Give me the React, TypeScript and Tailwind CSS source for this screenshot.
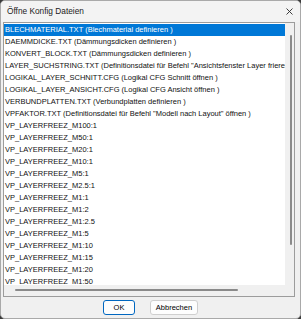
const files = [
  "BLECHMATERIAL.TXT (Blechmaterial definieren )",
  "DAEMMDICKE.TXT (Dämmungsdicken definieren )",
  "KONVERT_BLOCK.TXT (Dämmungsdicken definieren )",
  'LAYER_SUCHSTRING.TXT (Definitionsdatei für Befehl "Ansichtsfenster Layer frieren" öffnen )',
  "LOGIKAL_LAYER_SCHNITT.CFG (Logikal CFG Schnitt öffnen )",
  "LOGIKAL_LAYER_ANSICHT.CFG (Logikal CFG Ansicht öffnen )",
  "VERBUNDPLATTEN.TXT (Verbundplatten definieren )",
  'VPFAKTOR.TXT (Definitionsdatei für Befehl "Modell nach Layout" öffnen )',
  "VP_LAYERFREEZ_M100:1",
  "VP_LAYERFREEZ_M50:1",
  "VP_LAYERFREEZ_M20:1",
  "VP_LAYERFREEZ_M10:1",
  "VP_LAYERFREEZ_M5:1",
  "VP_LAYERFREEZ_M2.5:1",
  "VP_LAYERFREEZ_M1:1",
  "VP_LAYERFREEZ_M1:2",
  "VP_LAYERFREEZ_M1:2.5",
  "VP_LAYERFREEZ_M1:5",
  "VP_LAYERFREEZ_M1:10",
  "VP_LAYERFREEZ_M1:15",
  "VP_LAYERFREEZ_M1:20",
  "VP_LAYERFREEZ_M1:50",
];

export default function App() {
  const selected = 0;

  return (
    <div className="w-[301px] h-[319px] bg-[#3a3a3a] font-['Liberation_Sans',Arial,sans-serif]">
      <div className="h-full flex flex-col rounded-[5px] border border-[#a9a9a9] bg-[#f0f0f0] overflow-hidden">
        {/* title bar */}
        <div className="h-[21px] shrink-0 flex items-center justify-between pl-[6px] pr-[6px] bg-[#f3f3f3]">
          <span className="text-[8.3px] text-[#1b1b1b]">Öffne Konfig Dateien</span>
          <svg width="7" height="7" viewBox="0 0 7 7" className="mr-[1px] mt-[-1px]">
            <path d="M0.5 0.5 L6.5 6.5 M6.5 0.5 L0.5 6.5" stroke="#2a2a2a" strokeWidth="0.9" />
          </svg>
        </div>

        {/* list box */}
        <div className="ml-[2px] w-[292px] h-[275px] shrink-0 border border-[#9c9c9c] grid grid-cols-[1fr_9px] grid-rows-[1fr_11px]">
          <div className="bg-white overflow-hidden pt-[1px]">
            {files.map((f, i) => (
              <div
                key={f}
                className={
                  "h-[12px] leading-[12px] pl-[1px] whitespace-nowrap text-[7.5px] " +
                  (i === selected ? "bg-[#0078d7] text-white" : "text-[#111]")
                }
              >
                {f}
              </div>
            ))}
          </div>
          <div className="bg-[#f0f0f0] pt-[12px] pl-[5px]">
            <div className="w-[2px] h-[210px] rounded-full bg-[#8a8a8a]" />
          </div>
          <div className="bg-[#f0f0f0] pl-[11px] pt-[4px]">
            <div className="h-[2px] w-[223px] rounded-full bg-[#8a8a8a]" />
          </div>
          <div className="bg-[#f0f0f0]" />
        </div>

        {/* buttons */}
        <div className="flex justify-center gap-[15px] pt-[3px]">
          <button className="w-[32px] h-[15px] rounded-[3px] border border-[#0067c0] bg-[#fdfdfd] text-[7.5px] text-black leading-none">
            OK
          </button>
          <button className="w-[48px] h-[15px] rounded-[3px] border border-[#cfcfcf] bg-[#fdfdfd] text-[7.5px] text-black leading-none">
            Abbrechen
          </button>
        </div>
      </div>
    </div>
  );
}
